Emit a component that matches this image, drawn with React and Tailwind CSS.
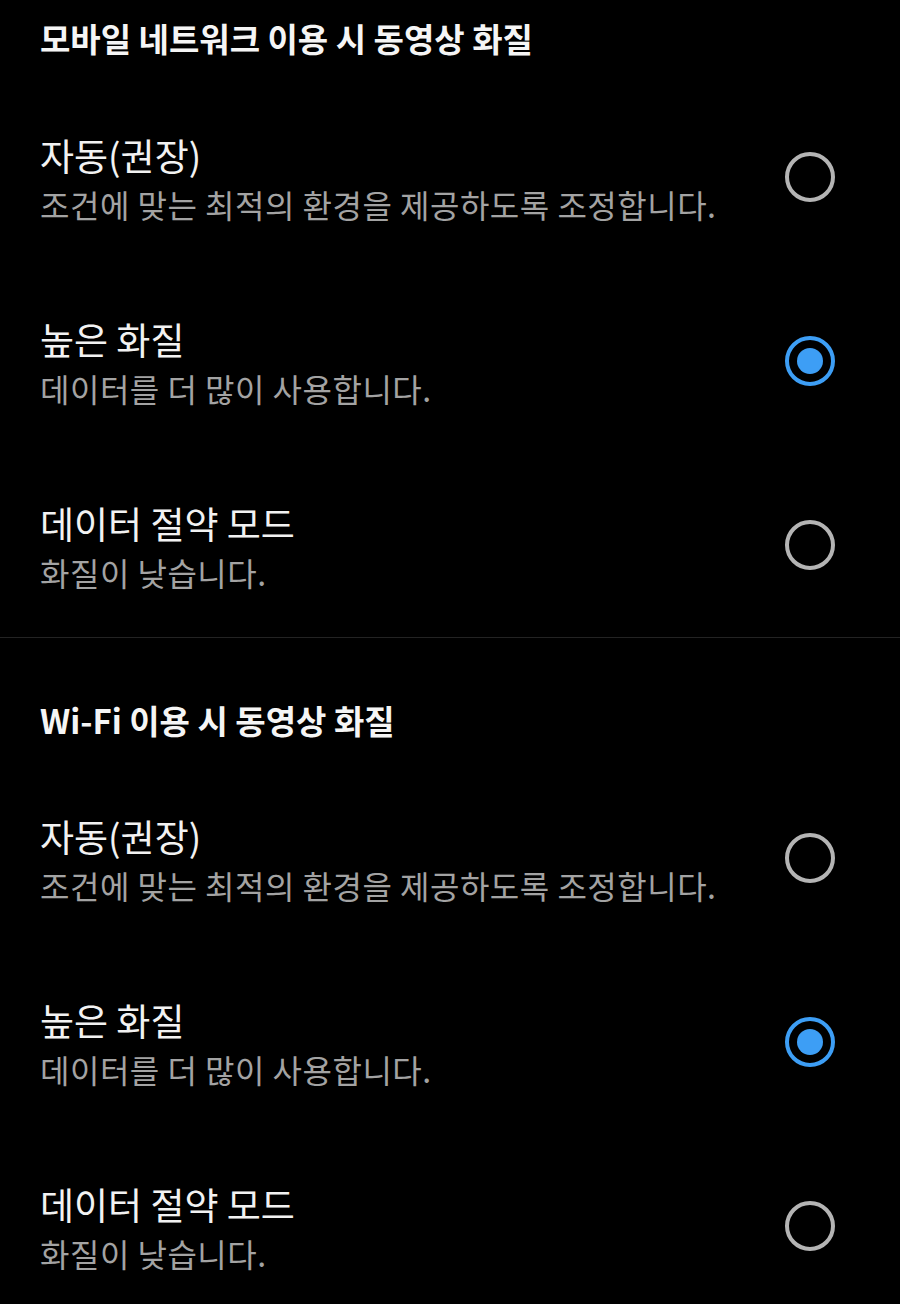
import React from "react";

const font = { fontFamily: '"Noto Sans CJK KR", "Noto Sans", sans-serif' };

function Radio({ checked }) {
  if (checked) {
    return (
      <div className="w-[50px] h-[50px] rounded-full border-[4px] border-[#3d9ef5] flex items-center justify-center shrink-0">
        <div className="w-[26px] h-[26px] rounded-full bg-[#3d9ef5]" />
      </div>
    );
  }
  return <div className="w-[50px] h-[50px] rounded-full border-[4px] border-[#b4b4b4] shrink-0" />;
}

function Item({ title, sub, checked }) {
  return (
    <div className="h-[184px] flex items-center justify-between pl-[40px] pr-[65px]">
      <div className="flex flex-col">
        <div className="text-[37px] leading-[50px] text-[#f2f2f2]">{title}</div>
        <div className="text-[32px] leading-[40px] text-[#a3a3a3] tracking-[0.5px] mt-[4px]">{sub}</div>
      </div>
      <Radio checked={checked} />
    </div>
  );
}

function Section({ header, first }) {
  return (
    <div>
      <div className={first ? "h-[85px] flex items-end pl-[40px] pb-[27px]" : "h-[128px] flex items-end pl-[40px] pb-[26px]"}>
        <div className="text-[33px] leading-[40px] font-semibold text-[#f5f5f5]">{header}</div>
      </div>
      <Item title="자동(권장)" sub="조건에 맞는 최적의 환경을 제공하도록 조정합니다." />
      <Item title="높은 화질" sub="데이터를 더 많이 사용합니다." checked />
      <Item title="데이터 절약 모드" sub="화질이 낮습니다." />
    </div>
  );
}

export default function App() {
  return (
    <div className="w-[900px] h-[1304px] bg-black overflow-hidden" style={font}>
      <Section header="모바일 네트워크 이용 시 동영상 화질" first />
      <div className="h-[1px] bg-[#232323]" />
      <Section header="Wi-Fi 이용 시 동영상 화질" />
    </div>
  );
}
